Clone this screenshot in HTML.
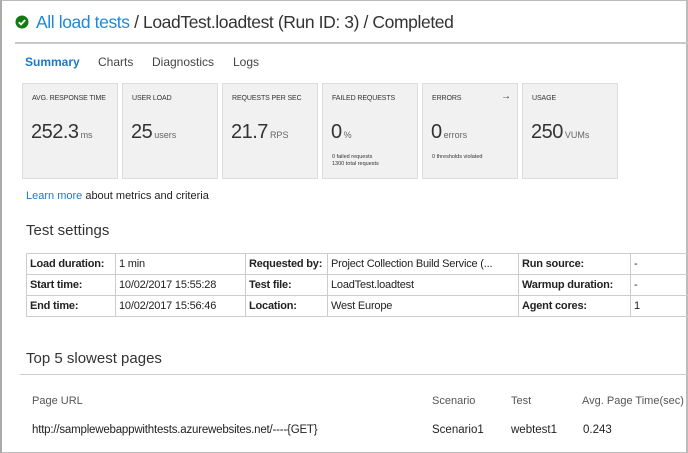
<!DOCTYPE html>
<html><head><style>
*{margin:0;padding:0;box-sizing:border-box}
body{width:688px;height:453px;overflow:hidden;background:#fff;font-family:"Liberation Sans",sans-serif;color:#222;position:relative}
.a{position:absolute;white-space:nowrap}
.frame{position:absolute;left:0;top:0;width:688px;height:453px;border:1px solid #bbb;border-left:2px solid #aaa;border-right:2px solid #bbb}
.card{position:absolute;top:83px;width:96px;height:96px;background:#f1f1f1;border:1px solid #ddd}
.card .l{position:absolute;left:9px;top:11px;font-size:7px;color:#333;letter-spacing:-.1px}
.card .v{position:absolute;left:8px;top:37px;font-size:20px;color:#333;letter-spacing:-.5px}
.card .v span{font-size:9px;color:#666;letter-spacing:0;margin-left:2px}
.card .s{position:absolute;left:9px;font-size:5.5px;color:#333;line-height:7px}
table{position:absolute;left:26px;top:253px;border-collapse:collapse;font-size:11px;width:680px;table-layout:fixed}
td{border:1px solid #ccc;height:21px;padding:0 3px;white-space:nowrap;overflow:hidden;letter-spacing:-.2px}
td.b{font-weight:bold}
</style></head><body>
<div class="frame"></div>
<svg class="a" style="left:15px;top:15px" width="14" height="14" viewBox="0 0 14 14"><circle cx="7" cy="7" r="6.5" fill="#107c10"/><path d="M3.8 7.2l2.2 2.2 4.2-4.4" stroke="#fff" stroke-width="1.8" fill="none"/></svg>
<div class="a" style="left:36px;top:12px;font-size:17.5px;color:#333;letter-spacing:-.4px"><span style="color:#1e88d8">All load tests</span> / LoadTest.loadtest (Run ID: 3) / Completed</div>
<div class="a" style="left:15px;top:42px;width:673px;height:2px;background:#c8c8c8"></div>
<div class="a" style="left:25px;top:55px;font-size:12px;font-weight:bold;color:#1e78c8">Summary</div>
<div class="a" style="left:98px;top:55px;font-size:12px;color:#444">Charts</div>
<div class="a" style="left:152px;top:55px;font-size:12px;color:#444">Diagnostics</div>
<div class="a" style="left:233px;top:55px;font-size:12px;color:#444">Logs</div>

<div class="card" style="left:22px"><div class="l">AVG. RESPONSE TIME</div><div class="v">252.3<span>ms</span></div></div>
<div class="card" style="left:122px"><div class="l">USER LOAD</div><div class="v">25<span>users</span></div></div>
<div class="card" style="left:222px"><div class="l">REQUESTS PER SEC</div><div class="v">21.7<span>RPS</span></div></div>
<div class="card" style="left:322px"><div class="l">FAILED REQUESTS</div><div class="v">0<span>%</span></div><div class="s" style="top:70px">0 failed requests<br>1300 total requests</div></div>
<div class="card" style="left:422px"><div class="l">ERRORS</div><div class="l" style="left:78px;top:7px;font-size:10px">→</div><div class="v">0<span>errors</span></div><div class="s" style="top:70px">0 thresholds violated</div></div>
<div class="card" style="left:522px"><div class="l">USAGE</div><div class="v">250<span>VUMs</span></div></div>

<div class="a" style="left:26px;top:190px;font-size:11px"><span style="color:#1e78c8">Learn more</span> about metrics and criteria</div>
<div class="a" style="left:26px;top:222px;font-size:15px;color:#333">Test settings</div>
<table>
<colgroup><col style="width:89px"><col style="width:130px"><col style="width:82px"><col style="width:191px"><col style="width:112px"><col style="width:76px"></colgroup>
<tr><td class="b">Load duration:</td><td>1 min</td><td class="b">Requested by:</td><td>Project Collection Build Service (...</td><td class="b">Run source:</td><td>-</td></tr>
<tr><td class="b">Start time:</td><td>10/02/2017 15:55:28</td><td class="b">Test file:</td><td>LoadTest.loadtest</td><td class="b">Warmup duration:</td><td>-</td></tr>
<tr><td class="b">End time:</td><td>10/02/2017 15:56:46</td><td class="b">Location:</td><td>West Europe</td><td class="b">Agent cores:</td><td>1</td></tr>
</table>
<div class="a" style="left:26px;top:350px;font-size:15px;color:#333">Top 5 slowest pages</div>
<div class="a" style="left:20px;top:374px;width:668px;height:1px;background:#ccc"></div>
<div class="a" style="left:32px;top:395px;font-size:11px;color:#555">Page URL</div>
<div class="a" style="left:432px;top:395px;font-size:11px;color:#555">Scenario</div>
<div class="a" style="left:511px;top:395px;font-size:11px;color:#555">Test</div>
<div class="a" style="left:582px;top:395px;font-size:11px;color:#555">Avg. Page Time(sec)</div>
<div class="a" style="left:32px;top:424px;font-size:11.5px;color:#222;letter-spacing:-.2px">http://samplewebappwithtests.azurewebsites.net/----{GET}</div>
<div class="a" style="left:432px;top:424px;font-size:11.5px;color:#222">Scenario1</div>
<div class="a" style="left:511px;top:424px;font-size:11.5px;color:#222">webtest1</div>
<div class="a" style="left:583px;top:424px;font-size:11.5px;color:#222">0.243</div>
</body></html>
